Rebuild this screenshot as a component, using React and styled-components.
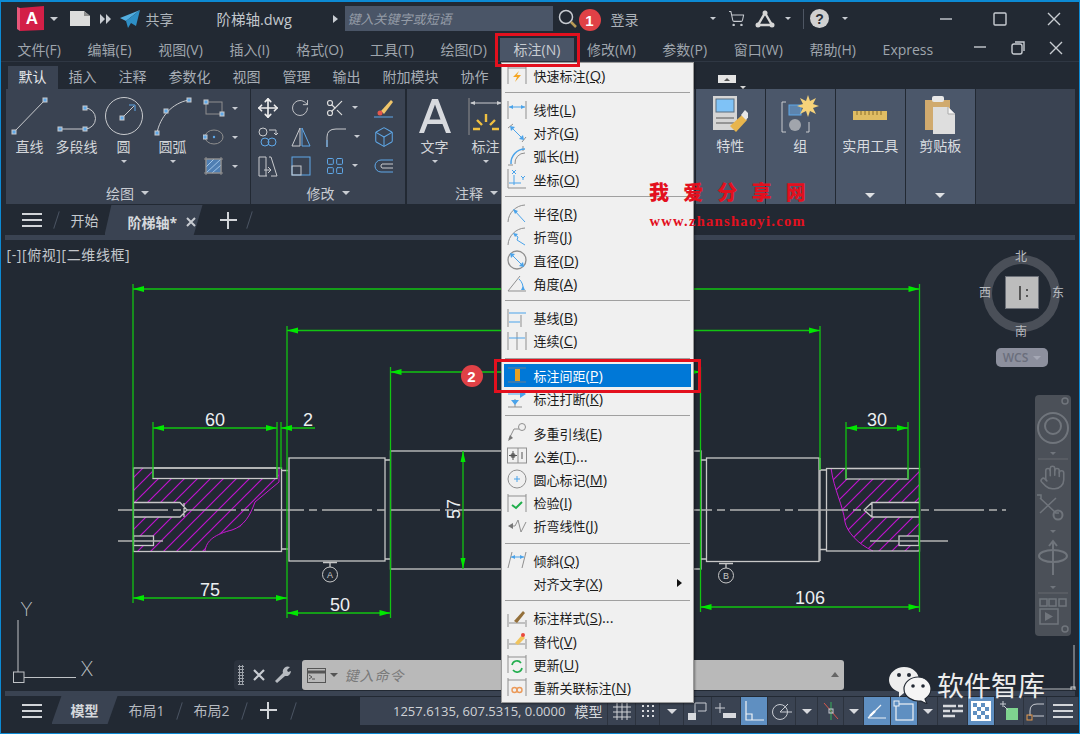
import React from "react";
import styled, { createGlobalStyle } from "styled-components";
import { Box, Hand, LayoutGrid, Move, RotateCw, Scissors, ShoppingCart } from "lucide-react";

const LN = "#c9cbce";
const BL = "#5fa8e8";
const GR = "#8f8f8f";
const MB = "#4aa3ea";
const GREEN = "#12c412";
const ARROW = "#00e800";

const Dot = ({ x, y }) => <rect x={x - 2} y={y - 2} width="4" height="4" fill={BL} />;

const Ico = ({ w = 20, h = 20, vw, vh, children }) => (
  <svg width={w} height={h} viewBox={`0 0 ${vw || w} ${vh || h}`} fill="none" stroke={LN} strokeWidth="1">
    {children}
  </svg>
);

const Caret = styled.span`
  display: inline-block;
  width: 0;
  height: 0;
  border-left: ${(p) => p.$s || 4}px solid transparent;
  border-right: ${(p) => p.$s || 4}px solid transparent;
  border-top: ${(p) => p.$s || 4}px solid ${(p) => p.$c || "#c8ccd2"};
`;

/* ribbon icons */
const LineIcon = (
  <Ico w={38} h={38}>
    <path d="M3 35 L34 3" />
    <Dot x={3} y={35} />
    <Dot x={34} y={3} />
  </Ico>
);
const PolyIcon = (
  <Ico w={42} h={38}>
    <path d="M4 32 H29 A10.5 10.5 0 0 0 29 11" />
    <Dot x={4} y={32} />
    <Dot x={29} y={32} />
    <Dot x={29} y={11} />
  </Ico>
);
const CircleIcon = (
  <Ico w={40} h={40}>
    <circle cx="20" cy="20" r="18.5" />
    <path d="M19 21 L30 10" stroke={LN} />
    <path d="M25 9 H31 V15" stroke={BL} />
    <Dot x={18} y={22} />
  </Ico>
);
const ArcIcon = (
  <Ico w={38} h={38}>
    <path d="M3 36 C6 20 18 6 35 3" />
    <Dot x={3} y={36} />
    <Dot x={12} y={14} />
    <Dot x={35} y={3} />
  </Ico>
);
const RectIcon = (
  <Ico w={22} h={18}>
    <rect x="3" y="3" width="16" height="12" stroke={GR} />
    <Dot x={3} y={3} />
    <Dot x={19} y={15} />
  </Ico>
);
const EllipseIcon = (
  <Ico w={22} h={18}>
    <ellipse cx="11" cy="9" rx="9" ry="7" stroke={GR} />
    <circle cx="11" cy="9" r="1.2" fill={BL} stroke="none" />
    <Dot x={2} y={9} />
  </Ico>
);
const HatchIcon = (
  <Ico w={22} h={20}>
    <rect x="3" y="3" width="15" height="14" fill="#4f7fb3" stroke={GR} />
    <path d="M3 11 L11 3 M3 17 L18 3 M9 17 L18 9" stroke="#9fc4e8" />
    <path d="M1 3 H20 M1 17 H20 M3 1 V19 M18 1 V19" stroke={GR} />
  </Ico>
);
const EraseIcon = (
  <Ico w={22} h={22}>
    <path d="M8 14 L18 3 L20 5 L11 17 Z" fill="#efc56a" stroke="none" />
    <circle cx="7" cy="16" r="2.5" fill="#e4574c" stroke="none" />
    <path d="M1 20 H20" stroke={BL} />
  </Ico>
);
const CopyIcon = (
  <Ico w={22} h={22}>
    <circle cx="6" cy="6" r="4" />
    <path d="M12 4 H19 V9 M17 7 L19 9 L21 7" />
    <circle cx="8" cy="16" r="4" stroke={BL} />
    <circle cx="15" cy="16" r="4" stroke={BL} />
  </Ico>
);
const MirrorIcon = (
  <Ico w={22} h={22}>
    <path d="M10 2 V20 H2 Z" />
    <path d="M12 2 V20 H20 Z" stroke={BL} />
  </Ico>
);
const FilletIcon = (
  <Ico w={22} h={22}>
    <path d="M2 21 V11 Q2 3 11 3 H21" />
    <path d="M2 14 V21" stroke={BL} />
  </Ico>
);
const StretchIcon = (
  <Ico w={22} h={24}>
    <path d="M2 3 V22 H10 M2 3 H9 M12 3 H14 L20 22 H14" />
    <path d="M7 16 H14 M11 13 L14 16 L11 19" />
    <path d="M9 3 V22" stroke={LN} />
  </Ico>
);
const ScaleIcon = (
  <Ico w={22} h={22}>
    <rect x="2" y="2" width="18" height="18" stroke={BL} />
    <rect x="2" y="11" width="9" height="9" stroke={LN} />
  </Ico>
);
const OffsetIcon = (
  <Ico w={22} h={20}>
    <path d="M20 4 H8 A6 6 0 0 0 8 16 H20" stroke={BL} />
    <path d="M20 8 H9 A2.5 2.5 0 0 0 9 12 H20" stroke={LN} />
  </Ico>
);
const TextAIcon = (
  <svg width="40" height="40" viewBox="0 0 40 40">
    <path d="M4 37 L17 3 H23 L36 37 H31 L27.5 28 H12.5 L9 37 Z M14.5 23.5 H25.5 L20 8.5 Z" fill="#d8dade" fillRule="evenodd" />
  </svg>
);
const DimIcon = (
  <Ico w={36} h={38}>
    <path d="M1 1 V38 M35 1 V38" stroke={GR} />
    <path d="M3 6 H33" stroke={LN} />
    <path d="M2 6 L7 4 V8 Z M34 6 L29 4 V8 Z" fill={LN} stroke="none" />
    <path d="M18 17 V25 M9 23 L14 28 M27 23 L22 28 M5 32 H12 M24 32 H31" stroke="#f0c040" strokeWidth="2.4" />
  </Ico>
);
const PropIcon = (
  <Ico w={36} h={40}>
    <rect x="1" y="1" width="24" height="34" fill="#d5d5d5" stroke="none" />
    <rect x="4" y="4" width="18" height="13" fill="#7fc2f6" stroke="#5a6f80" />
    <path d="M4 23 H22 M4 28 H22" stroke="#555" />
    <path d="M18 31 L30 20 L35 25 L24 37 Z" fill="#e8b54d" stroke="none" />
    <path d="M29 20 L33 15 L38 20 L34 25" fill="#e6e6e6" stroke="none" />
  </Ico>
);
const GroupIcon = (
  <Ico w={38} h={40}>
    <path d="M5 7 H1 V37 H5 M25 37 H28 V27" stroke={LN} />
    <rect x="8" y="10" width="12" height="10" fill="#5d84ad" stroke={BL} />
    <circle cx="14" cy="30" r="6" fill="#a1a5ac" stroke="none" />
    <path d="M27 0 L29 6 L35 3 L32 9 L38 11 L32 13 L35 19 L29 16 L27 22 L25 16 L19 19 L22 13 L16 11 L22 9 L19 3 L25 6 Z" fill="#f5d27a" stroke="none" />
  </Ico>
);
const RulerIcon = (
  <Ico w={34} h={12}>
    <rect x="0" y="2" width="34" height="9" fill="#e0bd63" stroke="none" />
    <path d="M4 2 V6 M8 2 V6 M12 2 V6 M16 2 V6 M20 2 V6 M24 2 V6 M28 2 V6" stroke="#8a6f2c" />
  </Ico>
);
const ClipIcon = (
  <Ico w={32} h={40}>
    <rect x="1" y="5" width="25" height="30" fill="#d0aa6e" stroke="none" />
    <rect x="8" y="1" width="12" height="6" rx="2" fill="#e8e8e8" stroke="none" />
    <path d="M9 12 H24 L31 19 V39 H9 Z" fill="#dedede" stroke="none" />
    <path d="M24 12 V19 H31" fill="#f5f5f5" stroke="#aaa" />
  </Ico>
);

/* dimension menu icons */
const Bars = ({ top = 1 }) => <path d={`M1 ${top} V19 M19 ${top} V19`} stroke={GR} />;
const Ah = () => <path d="M2 7 L6 5 V9 Z M18 7 L14 5 V9 Z" fill={MB} stroke="none" />;
const M = ({ children }) => (
  <svg width="20" height="20" viewBox="0 0 20 20" fill="none" stroke={GR} strokeWidth="1">
    {children}
  </svg>
);
const icons = {
  quick: (
    <M>
      <Bars />
      <path d="M1 3 H19" />
      <path d="M12 6 L6 12 H10 L8 17 L14 10 H10 Z" fill="#f5a623" stroke="none" />
    </M>
  ),
  linear: (
    <M>
      <Bars />
      <path d="M2 7 H18" stroke={MB} />
      <Ah />
    </M>
  ),
  aligned: (
    <M>
      <path d="M1 5 L6 1 M15 19 L19 14" />
      <path d="M4 4 L16 16" stroke={MB} />
      <path d="M3 3 L8 4 L4 8 Z M17 17 L12 16 L16 12 Z" fill={MB} stroke="none" />
    </M>
  ),
  arc: (
    <M>
      <path d="M1 19 H6 M16 0 V5" />
      <path d="M4 18 A14 14 0 0 1 18 3" stroke={MB} strokeWidth="1.5" />
      <path d="M8 18 A10 10 0 0 1 18 7" />
    </M>
  ),
  ordinate: (
    <M>
      <path d="M1 0 V19 H19" />
      <path d="M7 6 V16 M2 14 H14" stroke={MB} />
      <path d="M5 1 L9 5 M9 1 L5 5 M14 7 L16 9 L18 7 M16 9 V11" stroke={MB} />
    </M>
  ),
  radius: (
    <M>
      <path d="M1 18 A18 18 0 0 1 18 1" />
      <path d="M7 6 L18 18" stroke={MB} />
      <path d="M6 5 L11 7 L8 10 Z" fill={MB} stroke="none" />
    </M>
  ),
  jogged: (
    <M>
      <path d="M1 18 A18 18 0 0 1 18 1" />
      <path d="M7 7 L11 10 L10 13 L18 18" stroke={MB} />
      <path d="M6 6 L11 7 L8 10 Z" fill={MB} stroke="none" />
    </M>
  ),
  diameter: (
    <M>
      <circle cx="10" cy="10" r="9" strokeWidth="1.3" />
      <path d="M4 4 L16 16" stroke={MB} />
      <path d="M3 3 L8 4 L4 8 Z M17 17 L12 16 L16 12 Z" fill={MB} stroke="none" />
    </M>
  ),
  angular: (
    <M>
      <path d="M1 18 H19 M1 18 L13 3" />
      <path d="M12 6 A13 13 0 0 1 16 17" stroke={MB} />
      <path d="M14 17 L18 17 L16 13 Z" fill={MB} stroke="none" />
    </M>
  ),
  baseline: (
    <M>
      <path d="M1 1 V19 M14 7 V19" />
      <path d="M2 5 H19 M2 14 H13" stroke={MB} />
    </M>
  ),
  continued: (
    <M>
      <Bars />
      <path d="M10 1 V19" />
      <path d="M2 7 H18" stroke={MB} />
    </M>
  ),
  space: (
    <M>
      <path d="M1 3 H19 M1 17 H19" stroke="#6c7f8f" />
      <rect x="8" y="4" width="5" height="12" fill="#e8a020" stroke="none" />
    </M>
  ),
  breakd: (
    <M>
      <path d="M1 18 H15 M8 10 V18" />
      <path d="M1 5 H18" stroke={MB} />
      <path d="M13 1 L19 5 L13 9 Z M4 11 H12 L8 16 Z" fill={MB} stroke="none" />
    </M>
  ),
  leader: (
    <M>
      <circle cx="15" cy="4" r="3.5" />
      <path d="M12 6 H7 L2 16" />
      <path d="M1 18 L3 12 L6 15 Z" fill="#777" stroke="none" />
    </M>
  ),
  tolerance: (
    <M>
      <rect x="0.5" y="2" width="19" height="15" />
      <path d="M11 2 V17" />
      <circle cx="6" cy="9.5" r="2.5" fill="#777" stroke="none" />
      <path d="M2 9.5 H10 M6 5 V14 M15 6 V13" stroke="#555" />
    </M>
  ),
  center: (
    <M>
      <circle cx="10" cy="10" r="9" />
      <path d="M7 10 H13 M10 7 V13" stroke={MB} />
    </M>
  ),
  inspect: (
    <M>
      <Bars />
      <path d="M1 3 H19" />
      <path d="M5 12 L9 15 L15 9" stroke="#1fae4b" strokeWidth="2" />
    </M>
  ),
  jogline: (
    <M>
      <path d="M3 10 H8 L11 4 L14 16 L19 6" />
      <path d="M1 10 L6 7 V13 Z" fill="#777" stroke="none" />
    </M>
  ),
  oblique: (
    <M>
      <path d="M1 18 L5 2 M15 18 L19 2" />
      <path d="M4 7 H17" stroke={MB} />
      <path d="M4 7 L8 5 V9 Z M17 7 L13 5 V9 Z" fill={MB} stroke="none" />
    </M>
  ),
  style: (
    <M>
      <path d="M1 6 V19 M19 12 V19 M2 15 H18" />
      <path d="M7 13 L16 3 L18 5 L10 15 Z" fill="#94703b" stroke="none" />
    </M>
  ),
  override: (
    <M>
      <path d="M1 8 V18 M19 8 V18 M2 13 H18" />
      <path d="M8 12 L15 4 L18 7 L11 14 Z" fill="#f1c45c" stroke="none" />
      <circle cx="16" cy="4" r="2" fill="#e9483d" stroke="none" />
    </M>
  ),
  update: (
    <M>
      <Bars />
      <path d="M1 3 H19" />
      <path d="M5 11 A5 5 0 0 1 14 9 M15 14 A5 5 0 0 1 6 16" stroke="#22ae4e" strokeWidth="1.6" />
    </M>
  ),
  reassoc: (
    <M>
      <Bars />
      <path d="M1 3 H19" />
      <circle cx="7.5" cy="13" r="2.5" stroke="#eb9a5a" strokeWidth="1.4" />
      <circle cx="12.5" cy="13" r="2.5" stroke="#eb9a5a" strokeWidth="1.4" />
    </M>
  ),
};

const menuGroups = [
  [["quick", "快速标注", "Q"]],
  [["linear", "线性", "L"], ["aligned", "对齐", "G"], ["arc", "弧长", "H"], ["ordinate", "坐标", "O"]],
  [["radius", "半径", "R"], ["jogged", "折弯", "J"], ["diameter", "直径", "D"], ["angular", "角度", "A"]],
  [["baseline", "基线", "B"], ["continued", "连续", "C"]],
  [["space", "标注间距", "P", "", true], ["breakd", "标注打断", "K"]],
  [["leader", "多重引线", "E"], ["tolerance", "公差", "T", "..."], ["center", "圆心标记", "M"], ["inspect", "检验", "I"], ["jogline", "折弯线性", "J"]],
  [["oblique", "倾斜", "Q"], [null, "对齐文字", "X", "", false, true]],
  [["style", "标注样式", "S", "..."], ["override", "替代", "V"], ["update", "更新", "U"], ["reassoc", "重新关联标注", "N"]],
];

const menuBar = ["文件(F)", "编辑(E)", "视图(V)", "插入(I)", "格式(O)", "工具(T)", "绘图(D)", "标注(N)", "修改(M)", "参数(P)", "窗口(W)", "帮助(H)", "Express"];
const ribbonTabs = ["默认", "插入", "注释", "参数化", "视图", "管理", "输出", "附加模块", "协作"];

/* dimensions on the drawing */
const HDim = ({ x1, x2, y, left = true, right = true }) => (
  <g>
    <line x1={x1} x2={x2} y1={y} y2={y} stroke={GREEN} strokeWidth="1.3" />
    {left && <path d={`M${x1} ${y} l11 -3 v6 Z`} fill={ARROW} />}
    {right && <path d={`M${x2} ${y} l-11 -3 v6 Z`} fill={ARROW} />}
  </g>
);
const Ext = ({ x, y1, y2 }) => <line x1={x} x2={x} y1={y1} y2={y2} stroke={GREEN} strokeWidth="1.3" />;
const Num = ({ x, y, children, rotate }) => (
  <text x={x} y={y} fill="#eceff1" fontFamily="Liberation Sans" fontSize="18" textAnchor="middle" transform={rotate ? `rotate(-90 ${x} ${y})` : undefined}>
    {children}
  </text>
);

const Drawing = () => (
  <CadSvg viewBox="0 240 1080 450">
    <defs>
      <pattern id="hatch" width="13" height="13" patternUnits="userSpaceOnUse">
        <path d="M-1 14 L14 -1 M-1 1 L1 -1 M12 14 L14 12" stroke="#bd12cc" strokeWidth="1.2" />
      </pattern>
    </defs>

    {/* section hatching */}
    <path
      fillRule="evenodd"
      fill="url(#hatch)"
      d="M133 468 H153 V478.5 H277 V468 H279 V482 L255 502 L248 516 L240 527 L216 535 L207 544 L205 551.5 H133 Z M133 502.5 H180 L187 510 L180 517 H133 Z M133 536 H153 V545.5 H133 Z"
    />
    <path d="M279 468 V482 L255 502 C250 516 244 526 232 530 C216 534 206 540 205 551.5" stroke="#c51ad0" fill="none" />
    <path
      fillRule="evenodd"
      fill="url(#hatch)"
      d="M831 468 H846 V479 H908 V468 H919 V551 H873 C858 544 847 532 845 522 C843 505 834 490 831 468 Z M872 502.5 H919 V517 H872 L864 510 Z M899 536 H919 V545.5 H899 Z"
    />
    <path d="M831 468 C834 490 843 505 845 522 C847 532 858 544 873 551" stroke="#c51ad0" fill="none" />

    {/* shaft outline */}
    <g stroke="#c8c8c8" strokeWidth="1.3" fill="none">
      <rect x="133.5" y="468" width="148" height="83.5" />
      <rect x="153" y="468" width="124" height="10.5" />
      <path d="M133 502.5 H180 L187 510 L180 517 H133 M184 503 V517" />
      <rect x="133.5" y="536" width="20" height="9.5" />
      <path d="M281.5 470.5 H288 M281.5 549 H288" />
      <rect x="289" y="458" width="96" height="103" />
      <path d="M385 460 H391 M385 559 H391" />
      <rect x="390.5" y="451" width="310.5" height="118" />
      <path d="M701 460 H706 M701 559 H706" />
      <rect x="706.5" y="458" width="112.5" height="103.5" />
      <path d="M820 458 V561 M820 470 H826 M820 549.5 H826" />
      <rect x="826.5" y="468.5" width="93" height="82.5" />
      <rect x="846" y="468.5" width="62" height="10.5" />
      <path d="M919 502.5 H872 L864 510 L872 517 H919 M872 503 V517" />
      <rect x="899" y="536" width="20" height="9.5" />
    </g>

    {/* centre lines */}
    <path d="M118 510 H1006" stroke="#b4b4b4" strokeWidth="1.5" strokeDasharray="50 5 8 5" />
    <path d="M118 541 H163 M870 541 H948 M908 541 H915" stroke="#b4b4b4" strokeWidth="1.3" />

    {/* balloons */}
    <g stroke="#c8c8c8" fill="none">
      <path d="M323 562.5 H337 M330 562.5 V567" strokeWidth="1.3" />
      <circle cx="330" cy="574.5" r="7.5" />
      <path d="M719 563.5 H733 M726 563.5 V568" strokeWidth="1.3" />
      <circle cx="726" cy="575.5" r="7.5" />
    </g>
    <text x="330" y="578" fill="#c8c8c8" fontSize="9" fontFamily="Liberation Sans" textAnchor="middle">A</text>
    <text x="726" y="579" fill="#c8c8c8" fontSize="9" fontFamily="Liberation Sans" textAnchor="middle">B</text>

    {/* dimensions */}
    <Ext x={133} y1={284} y2={603} />
    <Ext x={287} y1={326} y2={618} />
    <Ext x={390.5} y1={367} y2={618} />
    <Ext x={700.5} y1={367} y2={612} />
    <Ext x={820} y1={326} y2={470} />
    <Ext x={919.5} y1={284} y2={612} />
    <Ext x={153} y1={422} y2={478} />
    <Ext x={277} y1={422} y2={478} />
    <Ext x={281} y1={422} y2={469} />
    <Ext x={846} y1={422} y2={479} />
    <Ext x={908} y1={422} y2={479} />
    <HDim x1={133} x2={919.5} y={289} />
    <HDim x1={287} x2={820} y={330.5} />
    <HDim x1={390.5} x2={700.5} y={372} />
    <HDim x1={153} x2={277} y={428} />
    <HDim x1={281} x2={315} y={428} right={false} />
    <HDim x1={133} x2={287} y={598} />
    <HDim x1={287} x2={390.5} y={613} />
    <HDim x1={700.5} x2={919.5} y={607} />
    <HDim x1={846} x2={908} y={428} />
    <line x1="463" x2="463" y1="451" y2="569" stroke={GREEN} strokeWidth="1.3" />
    <path d="M463 451 l-2.5 11 h5 Z M463 569 l-2.5 -11 h5 Z" fill={ARROW} />

    <Num x={215} y={426}>60</Num>
    <Num x={308} y={426}>2</Num>
    <Num x={877} y={426}>30</Num>
    <Num x={210} y={596}>75</Num>
    <Num x={340} y={611}>50</Num>
    <Num x={810} y={604}>106</Num>
    <Num x={460} y={509} rotate>57</Num>

    {/* ucs icon */}
    <g stroke="#bfc2c6" strokeWidth="1" fill="none">
      <path d="M18 620 V672 M24 677.5 H76" />
      <rect x="13.5" y="672" width="10.5" height="10.5" />
    </g>
    <text x="26.5" y="616" fill="#bfc2c6" fontFamily="Inter" fontWeight="200" fontSize="19" textAnchor="middle">Y</text>
    <text x="87" y="676" fill="#bfc2c6" fontFamily="Inter" fontWeight="200" fontSize="20" textAnchor="middle">X</text>

    {/* paper corner */}
    <path d="M1074 645 V689 H1040" stroke="#b9bcc0" fill="none" />
    <rect x="1071" y="687" width="4" height="4" stroke="#d5d5d5" fill="none" />
  </CadSvg>
);

const NavIcons = () => (
  <NavBar>
    <svg width="36" height="240" viewBox="0 0 36 240" fill="none" stroke="#70757c" strokeWidth="1.5">
      <circle cx="30" cy="6" r="3" />
      <circle cx="18" cy="33" r="15" strokeWidth="2" />
      <circle cx="18" cy="31" r="8" strokeWidth="2" />
      <path d="M15 57 h6 l-3 3 Z" fill="#70757c" stroke="none" />
      <path d="M3 64 H33" stroke="#5d6067" />
      <path d="M5 103 L21 118 M21 103 L5 118 M2 100 h4 v4 M20 118 h4" />
      <circle cx="23" cy="120" r="4.5" strokeWidth="2" />
      <path d="M15 135 h6 l-3 3 Z" fill="#70757c" stroke="none" />
      <path d="M18 146 V180 M14 151 L18 146 L22 151" strokeWidth="2" />
      <ellipse cx="18" cy="161" rx="14" ry="6" strokeWidth="2" />
      <path d="M15 191 h6 l-3 3 Z" fill="#70757c" stroke="none" />
      <path d="M3 198 H33" stroke="#5d6067" />
      <rect x="5" y="204" width="7" height="7" />
      <rect x="14" y="204" width="7" height="7" />
      <rect x="24" y="204" width="7" height="7" />
      <rect x="5" y="214" width="18" height="15" />
      <path d="M10 217 L18 221.5 L10 226 Z" fill="#70757c" stroke="none" />
      <circle cx="30" cy="234" r="3" />
    </svg>
    <HandOverlay>
      <Hand size={27} strokeWidth={1.4} />
    </HandOverlay>
  </NavBar>
);

const MenuRow = ({ icon, label, hot, suffix, active, sub }) => (
  <MenuItem $active={active}>
    <MenuIcon>{icon && icons[icon]}</MenuIcon>
    <span>
      {label}
      <HotKey>
        (<u>{hot}</u>){suffix}
      </HotKey>
    </span>
    {sub && <SubArrow />}
  </MenuItem>
);

const App = () => {
  return (
    <Frame>
      <GlobalStyle />

      <TitleBar>
        <Logo>
          <svg width="30" height="25" viewBox="0 0 30 25">
            <path d="M3 2 L27 0 V24 L3 25 Z" fill="#d31f47" />
            <path d="M0 1 L3 2 V25 L0 23 Z" fill="#e8567a" />
            <text x="15" y="18" fill="#fff" fontFamily="Liberation Sans" fontWeight="700" fontSize="17" textAnchor="middle">A</text>
          </svg>
        </Logo>
        <Caret $s={4} />
        <svg width="20" height="15" viewBox="0 0 20 15" style={{ marginLeft: 12 }}>
          <path d="M0 0 H14 L20 5 V15 H0 Z" fill="#dcdcdc" />
          <path d="M14 0 V5 H20 Z" fill="#8f8f8f" />
        </svg>
        <FwdGlyph>
          <path d="M0 0 L5 5 L0 10 Z M6 0 L11 5 L6 10 Z" fill="#c8ccd2" />
        </FwdGlyph>
        <svg width="20" height="18" viewBox="0 0 20 18" style={{ marginLeft: 9 }}>
          <path d="M20 0 L0 8 L6 11 Z" fill="#53aee0" />
          <path d="M20 0 L6 11 L8 18 L11 13 L16 16 Z" fill="#2e8fc6" />
        </svg>
        <TitleText $ml={6}>共享</TitleText>
        <FileName>阶梯轴.dwg</FileName>
        <RightTri />
        <SearchBox>键入关键字或短语</SearchBox>
        <svg width="20" height="20" viewBox="0 0 20 20" fill="none" style={{ marginLeft: 5 }}>
          <circle cx="8" cy="8" r="6.5" stroke="#c8ccd2" strokeWidth="1.5" />
          <path d="M13 13 L18 18" stroke="#b79a55" strokeWidth="2.5" />
        </svg>
        <TitleText $ml={33}>登录</TitleText>
        <CaretSlot $w={77}>
          <Caret $s={3} />
        </CaretSlot>
        <ShoppingCart size={17} color="#c8ccd2" strokeWidth={1.5} style={{ marginLeft: 12 }} />
        <svg width="20" height="18" viewBox="0 0 20 18" fill="none" style={{ marginLeft: 10 }}>
          <path d="M10 3 L17 15 H3 Z" stroke="#d5d5d5" strokeWidth="2.4" />
          <circle cx="10" cy="3" r="2.5" fill="#d5d5d5" />
          <circle cx="3" cy="15" r="2.5" fill="#d5d5d5" />
          <circle cx="17" cy="15" r="2.5" fill="#d5d5d5" />
        </svg>
        <CaretSlot $w={16}>
          <Caret $s={3} />
        </CaretSlot>
        <TitleSep />
        <HelpWrap>
          <svg width="19" height="19" viewBox="0 0 19 19">
            <circle cx="9.5" cy="9.5" r="9.5" fill="#d0d0d0" />
            <text x="9.5" y="14.5" fill="#2a3038" fontFamily="Liberation Sans" fontWeight="700" fontSize="14" textAnchor="middle">?</text>
          </svg>
        </HelpWrap>
        <CaretSlot $w={19}>
          <Caret $s={3} />
        </CaretSlot>
        <WinButtons>
          <svg width="14" height="14" viewBox="0 0 14 14" stroke="#c8ccd2" strokeWidth="1.4" fill="none">
            <path d="M1 7 H13" />
          </svg>
          <svg width="14" height="14" viewBox="0 0 14 14" stroke="#c8ccd2" strokeWidth="1.4" fill="none">
            <rect x="1" y="1" width="12" height="12" rx="1" />
          </svg>
          <svg width="14" height="14" viewBox="0 0 14 14" stroke="#c8ccd2" strokeWidth="1.4" fill="none">
            <path d="M1 1 L13 13 M13 1 L1 13" />
          </svg>
        </WinButtons>
      </TitleBar>

      <MenuBar>
        {menuBar.map((m) => (
          <TopMenu key={m} $active={m === "标注(N)"}>
            {m}
          </TopMenu>
        ))}
        <DocButtons>
          <svg width="14" height="14" viewBox="0 0 14 14" stroke="#c8ccd2" strokeWidth="1.4" fill="none">
            <path d="M1 6 H13" />
          </svg>
          <svg width="14" height="14" viewBox="0 0 14 14" stroke="#c8ccd2" strokeWidth="1.4" fill="none">
            <rect x="1" y="3" width="10" height="10" rx="2" />
            <path d="M4 1 H13 V10" />
          </svg>
          <svg width="14" height="14" viewBox="0 0 14 14" stroke="#c8ccd2" strokeWidth="1.4" fill="none">
            <path d="M1 1 L13 13 M13 1 L1 13" />
          </svg>
        </DocButtons>
      </MenuBar>

      <TabRow>
        {ribbonTabs.map((t, i) => (
          <RibbonTab key={t} $active={i === 0}>
            {t}
          </RibbonTab>
        ))}
        <MiniPanelBtn>
          <MiniCaret />
        </MiniPanelBtn>
        <Caret $s={3.5} $c="#d5d5d5" />
      </TabRow>

      <Ribbon>
        <Panel $w={244}>
          <DrawBody>
            <BigTool>
              {LineIcon}
              <ToolLabel>直线</ToolLabel>
            </BigTool>
            <BigTool>
              {PolyIcon}
              <ToolLabel>多段线</ToolLabel>
            </BigTool>
            <BigTool>
              {CircleIcon}
              <ToolLabel>圆</ToolLabel>
              <Caret $s={3.5} />
            </BigTool>
            <BigTool>
              {ArcIcon}
              <ToolLabel>圆弧</ToolLabel>
              <Caret $s={3.5} />
            </BigTool>
            <SmallColumn>
              <SmallRow>
                {RectIcon}
                <Caret $s={3} />
              </SmallRow>
              <SmallRow>
                {EllipseIcon}
                <Caret $s={3} />
              </SmallRow>
              <SmallRow>
                {HatchIcon}
                <Caret $s={3} />
              </SmallRow>
            </SmallColumn>
          </DrawBody>
          <PanelTitle>
            绘图 <Caret $s={4} />
          </PanelTitle>
        </Panel>

        <Panel $w={154}>
          <ModifyBody>
            <Move size={22} color="#eee" strokeWidth={1.8} />
            <RotateCw size={20} color={LN} strokeWidth={1.1} />
            <SmallRow>
              <Scissors size={20} color="#ddd" strokeWidth={1.4} />
              <Caret $s={3} />
            </SmallRow>
            {EraseIcon}
            {CopyIcon}
            {MirrorIcon}
            <SmallRow>
              {FilletIcon}
              <Caret $s={3} />
            </SmallRow>
            <Box size={22} color={BL} strokeWidth={1.1} />
            {StretchIcon}
            {ScaleIcon}
            <SmallRow>
              <LayoutGrid size={20} color={BL} strokeWidth={1.2} />
              <Caret $s={3} />
            </SmallRow>
            {OffsetIcon}
          </ModifyBody>
          <PanelTitle>
            修改 <Caret $s={4} />
          </PanelTitle>
        </Panel>

        <Panel $w={288}>
          <AnnotBody>
            <BigTool $w={56}>
              {TextAIcon}
              <ToolLabel>文字</ToolLabel>
              <Caret $s={3.5} />
            </BigTool>
            <BigTool $w={46}>
              {DimIcon}
              <ToolLabel>标注</ToolLabel>
              <Caret $s={3.5} />
            </BigTool>
          </AnnotBody>
          <PanelTitle $pad={148}>
            注释 <Caret $s={4} />
          </PanelTitle>
        </Panel>

        <TallPanel>
          {PropIcon}
          <TallLabel>特性</TallLabel>
        </TallPanel>
        <TallPanel>
          {GroupIcon}
          <TallLabel>组</TallLabel>
        </TallPanel>
        <TallPanel>
          <RulerSlot>{RulerIcon}</RulerSlot>
          <TallLabel>实用工具</TallLabel>
          <Caret $s={5} $c="#dfe1e4" />
        </TallPanel>
        <TallPanel>
          {ClipIcon}
          <TallLabel>剪贴板</TallLabel>
          <Caret $s={5} $c="#dfe1e4" />
        </TallPanel>
        <RibbonRest />
      </Ribbon>

      <DocTabs>
        <Burger />
        <Slash />
        <DocTab>开始</DocTab>
        <ActiveDocTab>
          阶梯轴*
          <TabClose>
            <svg width="10" height="10" viewBox="0 0 10 10" stroke="#c8ccd2" strokeWidth="2">
              <path d="M1 1 L9 9 M9 1 L1 9" />
            </svg>
          </TabClose>
        </ActiveDocTab>
        <PlusSign $ml={17} />
        <Slash $ml={12} />
      </DocTabs>
      <Strip />

      <Viewport>
        <Drawing />
        <ViewLabel>[-][俯视][二维线框]</ViewLabel>

        <ViewCube>
          <Ring />
          <CubeFace>
            <svg width="22" height="20" viewBox="0 0 22 20" stroke="#555" fill="none">
              <path d="M9 3 V17" strokeWidth="2" />
              <path d="M16 6 V8 M16 12 V14" strokeWidth="2" />
            </svg>
          </CubeFace>
          <Compass $pos="north">北</Compass>
          <Compass $pos="south">南</Compass>
          <Compass $pos="east">东</Compass>
          <Compass $pos="west">西</Compass>
          <WcsPill>
            WCS <Caret $s={4} $c="#a5a8b5" />
          </WcsPill>
        </ViewCube>

        <NavIcons />

        <CommandLine>
          <CmdHandle>
            <Grip />
            <svg width="14" height="14" viewBox="0 0 14 14" stroke="#c8ccd2" strokeWidth="2.2">
              <path d="M2 2 L12 12 M12 2 L2 12" />
            </svg>
            <svg width="18" height="18" viewBox="0 0 18 18" fill="#b6bac0">
              <path d="M1 15 L9 7 A5 5 0 0 1 16 1 L13 4 L14 6 L17 5 A5 5 0 0 1 11 10 L3 17 Z" />
            </svg>
          </CmdHandle>
          <CmdInput>
            <svg width="20" height="15" viewBox="0 0 20 15" fill="none" stroke="#555">
              <rect x="0.5" y="0.5" width="18" height="14" />
              <path d="M0.5 4 H18.5" strokeWidth="3" />
              <path d="M2 7 L5 9 L2 11 M5 11 H8" />
            </svg>
            <Caret $s={4} $c="#555" />
            <CmdText>键入命令</CmdText>
            <CmdUp />
          </CmdInput>
        </CommandLine>
      </Viewport>

      <StatusStrip />
      <StatusBar>
        <Burger $small />
        <ModelTab>模型</ModelTab>
        <LayoutTab>布局1</LayoutTab>
        <Slash />
        <LayoutTab>布局2</LayoutTab>
        <Slash />
        <PlusSign $ml={12} />
        <Slash $ml={16} />
        <Coords>1257.6135, 607.5315, 0.0000</Coords>
        <StatusButton $w={38}>模型</StatusButton>
        <StatusButton $w={28}>
          <Ico w={20} h={20}>
            <path d="M5 1 V19 M10 1 V19 M15 1 V19 M1 6 H19 M1 11 H19 M1 16 H19" stroke="#d0d3d6" />
          </Ico>
        </StatusButton>
        <StatusButton $w={24}>
          <Ico w={16} h={16}>
            <path d="M2 3 h2 M7 3 h2 M12 3 h2 M2 8 h2 M7 8 h2 M12 8 h2 M2 13 h2 M7 13 h2 M12 13 h2" stroke="#d8dade" strokeWidth="2" />
          </Ico>
        </StatusButton>
        <StatusButton $w={24}>
          <Caret $s={5} $c="#d8dade" />
        </StatusButton>
        <StatusButton $w={28}>
          <Ico w={22} h={22}>
            <path d="M8 13 V3 H19 V11 H11" stroke="#c8ccd2" />
            <rect x="1" y="13" width="8" height="7" fill="#d8dade" stroke="none" />
          </Ico>
        </StatusButton>
        <StatusButton $w={29}>
          <Ico w={22} h={20}>
            <path d="M5 2 V12 M0 7 H10" stroke="#c8ccd2" />
            <rect x="8" y="12" width="13" height="5" fill="#d8dade" stroke="none" />
          </Ico>
        </StatusButton>
        <StatusButton $w={27} $on>
          <Ico w={20} h={22}>
            <path d="M2 1 V20 H20 M2 14 H8 V20" stroke="#eef2f6" strokeWidth="1.2" />
          </Ico>
        </StatusButton>
        <StatusButton $w={28}>
          <Ico w={24} h={20}>
            <circle cx="10" cy="11" r="7.5" stroke="#c8ccd2" />
            <path d="M10 11 L18 3 M10 11 H22" stroke="#c8ccd2" />
          </Ico>
        </StatusButton>
        <StatusButton $w={22}>
          <Caret $s={5} $c="#d8dade" />
        </StatusButton>
        <StatusButton $w={26}>
          <Ico w={18} h={20}>
            <path d="M2 2 L16 18" stroke="#d8564a" />
            <path d="M9 1 V19" stroke="#35b05a" />
            <rect x="7" y="8" width="4" height="4" stroke="#c8ccd2" />
          </Ico>
        </StatusButton>
        <StatusButton $w={20}>
          <Caret $s={5} $c="#d8dade" />
        </StatusButton>
        <StatusButton $w={27} $on>
          <Ico w={22} h={20}>
            <path d="M2 17 L15 4 M2 17 H20" stroke="#eef2f6" strokeWidth="1.2" />
            <path d="M4 15 L9 10" stroke="#fff" strokeWidth="2.4" />
          </Ico>
        </StatusButton>
        <StatusButton $w={27} $on>
          <Ico w={22} h={22}>
            <rect x="3" y="4" width="17" height="16" stroke="#eef2f6" strokeWidth="1.2" />
            <rect x="1" y="1" width="5" height="5" stroke="#eef2f6" fill="#5f8fc1" />
          </Ico>
        </StatusButton>
        <StatusButton $w={20}>
          <Caret $s={5} $c="#d8dade" />
        </StatusButton>
        <StatusButton $w={30}>
          <Ico w={20} h={14}>
            <path d="M0 2 H13 M15 2 H20 M0 7 H7 M9 7 H20 M0 12 H12" stroke="#d8dade" strokeWidth="2.4" />
          </Ico>
        </StatusButton>
        <StatusButton $w={27} $on>
          <Ico w={20} h={20}>
            <rect width="20" height="20" fill="#fff" stroke="none" />
            <path d="M2 2 h4 v4 h-4 Z M10 2 h4 v4 h-4 Z M6 6 h4 v4 h-4 Z M14 6 h4 v4 h-4 Z M2 10 h4 v4 h-4 Z M10 10 h4 v4 h-4 Z M6 14 h4 v4 h-4 Z M14 14 h4 v4 h-4 Z" fill="#5f8fc1" stroke="none" />
          </Ico>
        </StatusButton>
        <StatusButton $w={29}>
          <Ico w={20} h={20}>
            <rect x="7" y="7" width="12" height="12" fill="#7fd48f" stroke="none" />
            <path d="M1 3 H7 M4 0 V6 M5 5 L9 9" stroke="#c8ccd2" />
          </Ico>
        </StatusButton>
        <StatusButton $w={23}>
          <Ico w={18} h={20}>
            <path d="M4 15 V10 Q4 3 11 3 H18 M7 15 H18" stroke="#c8ccd2" />
            <rect x="1" y="14" width="5" height="5" stroke="#e69a4c" />
          </Ico>
        </StatusButton>
        <StatusButton $w={32}>
          <Burger $inline />
        </StatusButton>
      </StatusBar>

      <DimMenu>
        {menuGroups.map((group, gi) => (
          <React.Fragment key={gi}>
            {gi > 0 && <MenuSep />}
            {group.map(([icon, label, k, suffix, active, sub]) => (
              <MenuRow key={label + k} icon={icon} label={label} hot={k} suffix={suffix} active={active} sub={sub} />
            ))}
          </React.Fragment>
        ))}
      </DimMenu>

      <RedBox $x={495} $y={33} $w={85} $h={34} />
      <RedBox $x={494} $y={359} $w={207} $h={34} />
      <Badge $x={590} $y={20}>1</Badge>
      <Badge $x={472} $y={376}>2</Badge>
      <WaterTitle>我 爱 分 享 网</WaterTitle>
      <WaterUrl>www.zhanshaoyi.com</WaterUrl>

      <WeChat>
        <svg width="42" height="38" viewBox="0 0 42 38">
          <path d="M15 1 C24 1 30 7 30 14 C30 21 24 27 15 27 L10 31 L10 26 C4 24 0 19 0 14 C0 7 7 1 15 1 Z" fill="#eeeeee" />
          <path d="M29 11 C36 11 42 16 42 23 C42 28 39 31 36 33 L38 38 L32 35 C24 36 15 31 15 23 C15 16 22 11 29 11 Z" fill="#f5f5f5" stroke="#222933" strokeWidth="1.2" />
          <circle cx="10" cy="9" r="2" fill="#222933" />
          <circle cx="20" cy="9" r="2" fill="#222933" />
          <circle cx="24" cy="20" r="1.8" fill="#222933" />
          <circle cx="34" cy="20" r="1.8" fill="#222933" />
        </svg>
        <WeChatName>软件智库</WeChatName>
      </WeChat>
    </Frame>
  );
};

const GlobalStyle = createGlobalStyle`
  html, body {
    margin: 0;
    padding: 0;
    background: #222933;
    overflow: hidden;
  }
  * {
    box-sizing: border-box;
  }
`;

const Frame = styled.div`
  position: relative;
  width: 1080px;
  height: 734px;
  display: flex;
  flex-direction: column;
  background: #222933;
  border: 1.5px solid #0c8ad4;
  border-top-width: 2px;
  overflow: hidden;
  font-family: "Open Sans", "Noto Sans CJK SC", sans-serif;
  font-size: 13px;
  color: #c8ccd2;
`;

const TitleBar = styled.div`
  height: 33px;
  flex: none;
  display: flex;
  align-items: center;
  padding-left: 15.5px;
`;

const Logo = styled.div`
  display: flex;
  margin-right: 3px;
`;

const FwdGlyph = ({ children }) => (
  <svg width="11" height="10" viewBox="0 0 11 10" style={{ marginLeft: 10 }}>
    {children}
  </svg>
);

const TitleText = styled.span`
  font-size: 14px;
  margin-left: ${(p) => p.$ml || 0}px;
  color: #aeb4bb;
`;

const FileName = styled.span`
  font-size: 14.5px;
  margin-left: 43px;
  width: 116px;
  color: #c3c8ce;
`;

const RightTri = styled.span`
  width: 0;
  height: 0;
  border-top: 4px solid transparent;
  border-bottom: 4px solid transparent;
  border-left: 5px solid #c8ccd2;
`;

const SearchBox = styled.div`
  margin-left: 7px;
  width: 208px;
  height: 25px;
  background: #4a5567;
  display: flex;
  align-items: center;
  padding-left: 3px;
  font-style: italic;
  font-size: 13px;
  color: #949ba6;
`;

const CaretSlot = styled.span`
  width: ${(p) => p.$w}px;
  display: flex;
  justify-content: flex-end;
`;

const TitleSep = styled.span`
  width: 1px;
  height: 20px;
  background: #4e5663;
  margin-left: 12px;
`;

const HelpWrap = styled.span`
  display: flex;
  margin-left: 6px;
`;

const WinButtons = styled.div`
  display: flex;
  gap: 40px;
  margin-left: 91px;
`;

const MenuBar = styled.div`
  height: 27px;
  flex: none;
  display: flex;
  align-items: flex-end;
  padding: 0 16.5px 0 3.2px;
  border-bottom: 1px solid #2f3743;
`;

const TopMenu = styled.div`
  height: 23px;
  padding: 0 13.3px;
  line-height: 23px;
  font-size: 14px;
  white-space: nowrap;
  color: ${(p) => (p.$active ? "#c8ccd2" : "#9fa5ad")};
  background: ${(p) => (p.$active ? "#4a5567" : "transparent")};
`;

const DocButtons = styled.div`
  display: flex;
  gap: 24px;
  margin-left: auto;
  align-self: center;
`;

const TabRow = styled.div`
  height: 27px;
  flex: none;
  display: flex;
  align-items: flex-end;
  padding-left: 6.5px;
`;

const RibbonTab = styled.div`
  height: 23px;
  padding: 0 11px;
  line-height: 21px;
  font-size: 14px;
  white-space: nowrap;
  color: ${(p) => (p.$active ? "#e6e8ea" : "#a8aeb6")};
  background: ${(p) => (p.$active ? "#3a4352" : "transparent")};
`;

const MiniPanelBtn = styled.div`
  width: 18px;
  height: 8px;
  margin: 0 4px 6px 218px;
  background: #e4e4e4;
  display: flex;
  align-items: center;
  justify-content: center;
`;

const MiniCaret = styled.span`
  width: 0;
  height: 0;
  border-left: 3px solid transparent;
  border-right: 3px solid transparent;
  border-bottom: 3px solid #555;
`;

const Ribbon = styled.div`
  height: 116px;
  flex: none;
  display: flex;
  gap: 1.5px;
  padding: 0 4.5px 1px;
`;

const Panel = styled.div`
  width: ${(p) => p.$w}px;
  flex: none;
  display: flex;
  flex-direction: column;
  background: #3a4352;
`;

const PanelTitle = styled.div`
  height: 20px;
  margin-bottom: 1px;
  display: flex;
  align-items: center;
  justify-content: center;
  gap: 7px;
  font-size: 14px;
  color: #c8ccd2;
  padding-right: ${(p) => p.$pad || 0}px;
`;

const DrawBody = styled.div`
  flex: 1;
  display: grid;
  grid-template-columns: 48px 46px 48px 50px 52px;
  padding-top: 6px;
`;

const BigTool = styled.div`
  display: flex;
  flex-direction: column;
  align-items: center;
  width: ${(p) => (p.$w ? `${p.$w}px` : "auto")};
  height: 72px;
  & > svg:first-child {
    height: 42px;
    flex: none;
  }
`;

const ToolLabel = styled.div`
  margin-bottom: 3px;
  font-size: 14px;
  line-height: 20px;
  color: #d2d5d9;
  white-space: nowrap;
`;

const SmallColumn = styled.div`
  display: flex;
  flex-direction: column;
  gap: 9px;
  padding: 3px 0 0 5px;
`;

const SmallRow = styled.div`
  height: 20px;
  display: flex;
  align-items: center;
  gap: 7px;
`;

const ModifyBody = styled.div`
  flex: 1;
  display: grid;
  grid-template-columns: 33px 35px 48px 32px;
  grid-auto-rows: 29px;
  justify-items: start;
  align-items: center;
  padding: 4px 0 0 6px;
`;

const AnnotBody = styled.div`
  flex: 1;
  display: flex;
  padding-top: 6px;
`;

const TallPanel = styled.div`
  width: 68.5px;
  flex: none;
  display: flex;
  flex-direction: column;
  align-items: center;
  padding-top: 6px;
  background: #4b576a;
  & > svg {
    height: 40px;
    flex: none;
  }
  & > span {
    margin-top: auto;
    margin-bottom: 6px;
  }
`;

const RulerSlot = styled.div`
  height: 40px;
  display: flex;
  align-items: center;
`;

const TallLabel = styled.div`
  margin-top: 1px;
  font-size: 14px;
  line-height: 20px;
  color: #dadde0;
  white-space: nowrap;
`;

const RibbonRest = styled.div`
  flex: 1;
  background: #3a4352;
`;

const DocTabs = styled.div`
  height: 30px;
  flex: none;
  display: flex;
  align-items: center;
  padding-left: 20.5px;
`;

const Burger = styled.span`
  display: block;
  width: 20px;
  height: 14px;
  flex: none;
  border-top: 2.4px solid #d2d5d9;
  border-bottom: 2.4px solid #d2d5d9;
  background: linear-gradient(#d2d5d9, #d2d5d9) center / 100% 2.4px no-repeat;
`;

const Slash = styled.span`
  width: 1px;
  height: 18px;
  flex: none;
  margin: 0 14px 0 ${(p) => p.$ml || 14}px;
  background: #4b5463;
  transform: rotate(18deg);
`;

const DocTab = styled.div`
  font-size: 14px;
  color: #c5c9ce;
`;

const ActiveDocTab = styled.div`
  width: 98px;
  height: 30px;
  flex: none;
  margin-left: 6px;
  padding: 4px 0 0 23px;
  display: flex;
  align-items: center;
  gap: 9px;
  font-size: 14px;
  font-weight: 700;
  color: #d5d8dc;
  background: #3a4352;
  clip-path: polygon(7% 0, 100% 0, 91% 100%, 0 100%);
`;

const TabClose = styled.span`
  display: flex;
`;

const PlusSign = styled.span`
  width: 17px;
  height: 17px;
  flex: none;
  margin-left: ${(p) => p.$ml || 0}px;
  background:
    linear-gradient(#d2d5d9, #d2d5d9) center / 100% 2.4px no-repeat,
    linear-gradient(#d2d5d9, #d2d5d9) center / 2.4px 100% no-repeat;
`;

const Strip = styled.div`
  height: 5px;
  flex: none;
  margin: 0 4px;
  background: #3a4352;
`;

const Viewport = styled.div`
  position: relative;
  height: 450px;
  flex: none;
`;

const CadSvg = styled.svg`
  display: block;
  position: absolute;
  left: -1.5px;
  top: 0;
  width: 1080px;
  height: 450px;
`;

const ViewLabel = styled.div`
  position: absolute;
  left: 5.5px;
  top: 4px;
  font-size: 14px;
  letter-spacing: 0.6px;
  color: #c3c7cc;
`;

const ViewCube = styled.div`
  position: absolute;
  left: 982px;
  top: 13px;
  width: 78px;
  height: 118px;
`;

const Ring = styled.div`
  position: absolute;
  left: 0;
  top: 2px;
  width: 77px;
  height: 77px;
  border-radius: 50%;
  border: 9px solid #4a4f58;
`;

const CubeFace = styled.div`
  position: absolute;
  left: 22px;
  top: 23px;
  width: 34px;
  height: 33px;
  display: flex;
  align-items: center;
  justify-content: center;
  background: #bcbcbc;
  border: 1px solid #6c7078;
`;

const Compass = styled.span`
  position: absolute;
  font-size: 12px;
  line-height: 14px;
  color: #b9bcc0;
  ${(p) => p.$pos === "north" && "left: 32px; top: -3px;"}
  ${(p) => p.$pos === "south" && "left: 32px; top: 72px;"}
  ${(p) => p.$pos === "east" && "left: 69px; top: 33px;"}
  ${(p) => p.$pos === "west" && "left: -4px; top: 33px;"}
`;

const WcsPill = styled.div`
  position: absolute;
  left: 13px;
  top: 95px;
  width: 52px;
  height: 19px;
  border-radius: 5px;
  display: flex;
  align-items: center;
  justify-content: center;
  gap: 5px;
  font-size: 12px;
  font-weight: 600;
  color: #6a6e7c;
  background: #8d909e;
`;

const NavBar = styled.div`
  position: absolute;
  left: 1034px;
  top: 155px;
  width: 36px;
  height: 241px;
  border-radius: 4px;
  background: #4b5058;
`;

const HandOverlay = styled.div`
  position: absolute;
  left: 4px;
  top: 69px;
  color: #70757c;
  display: flex;
`;

const CommandLine = styled.div`
  position: absolute;
  left: 232.5px;
  top: 420px;
  width: 610px;
  height: 30px;
  display: flex;
`;

const CmdHandle = styled.div`
  width: 68px;
  flex: none;
  display: flex;
  align-items: center;
  gap: 8px;
  padding-left: 4px;
  background: #2b323d;
  border-radius: 4px 0 0 4px;
`;

const Grip = styled.span`
  width: 6px;
  height: 20px;
  background-image: radial-gradient(#9da2a9 1px, transparent 1.2px);
  background-size: 3px 3px;
`;

const CmdInput = styled.div`
  flex: 1;
  position: relative;
  display: flex;
  align-items: center;
  gap: 3px;
  padding-left: 5px;
  background: #b9b9b9;
  border-radius: 3px;
`;

const CmdText = styled.span`
  margin-left: 4px;
  font-style: italic;
  font-size: 14px;
  letter-spacing: 1px;
  color: #7a7a7a;
`;

const CmdUp = styled.span`
  position: absolute;
  right: 5px;
  top: 12px;
  width: 0;
  height: 0;
  border-left: 4px solid transparent;
  border-right: 4px solid transparent;
  border-bottom: 5px solid #666;
`;

const StatusStrip = styled.div`
  height: 5px;
  flex: none;
  margin: 1px 4px 0;
  background: #3a4352;
`;

const StatusBar = styled.div`
  flex: 1;
  display: flex;
  align-items: flex-start;
  padding-left: 20.5px;
  & > ${Burger} {
    margin-top: 8px;
  }
  & > span {
    margin-top: 6px;
  }
`;

const ModelTab = styled.div`
  width: 66px;
  height: 28px;
  flex: none;
  margin-left: 10px;
  display: flex;
  align-items: center;
  justify-content: center;
  font-weight: 700;
  font-size: 14px;
  color: #d5d8dc;
  background: #3a4352;
  clip-path: polygon(15% 0, 100% 0, 85% 100%, 0 100%);
`;

const LayoutTab = styled.div`
  height: 28px;
  margin-left: 11px;
  display: flex;
  align-items: center;
  font-size: 14px;
  color: #b6bac0;
  & + ${Slash} {
    margin-right: 3px;
  }
`;

const Coords = styled.div`
  width: 210px;
  height: 28px;
  flex: none;
  margin: 1px 0 0 0;
  padding-left: 33px;
  display: flex;
  align-items: center;
  font-size: 13px;
  white-space: nowrap;
  color: #cfd2d6;
  background: #3a4352;
  margin-left: auto;
`;

const StatusButton = styled.div`
  width: ${(p) => p.$w}px;
  height: 28px;
  flex: none;
  margin-top: 1px;
  display: flex;
  align-items: center;
  justify-content: center;
  font-size: 14px;
  color: #d5d8dc;
  background: ${(p) => (p.$on ? "#5f8fc1" : "#3a4352")};
  border-right: 1px solid #2c333e;
  & > ${Burger} {
    margin: 0;
  }
`;

const DimMenu = styled.div`
  position: absolute;
  left: 499.5px;
  top: 60px;
  width: 193px;
  height: 641px;
  padding: 0.5px 2px 0;
  background: #f0f0f0;
  border: 1px solid #9a9a9a;
  box-shadow: 1px 1px 2px rgba(0, 0, 0, 0.4);
  color: #1c1c1c;
`;

const MenuItem = styled.div`
  position: relative;
  height: 23.2px;
  display: flex;
  align-items: center;
  font-size: 13px;
  white-space: nowrap;
  color: ${(p) => (p.$active ? "#fff" : "#1c1c1c")};
  background: ${(p) => (p.$active ? "#0078d7" : "transparent")};
`;

const HotKey = styled.span`
  font-size: 14.5px;
`;

const MenuIcon = styled.span`
  width: 30px;
  height: 20px;
  flex: none;
  padding-left: 3px;
  display: flex;
`;

const SubArrow = styled.span`
  position: absolute;
  right: 9px;
  top: 7px;
  width: 0;
  height: 0;
  border-top: 4.5px solid transparent;
  border-bottom: 4.5px solid transparent;
  border-left: 5px solid #111;
`;

const MenuSep = styled.div`
  height: 11.3px;
  display: flex;
  align-items: center;
  padding: 0 1px;
  &::after {
    content: "";
    flex: 1;
    height: 1px;
    background: #a0a0a0;
  }
`;

const RedBox = styled.div`
  position: absolute;
  left: ${(p) => p.$x - 1.5}px;
  top: ${(p) => p.$y - 2}px;
  width: ${(p) => p.$w}px;
  height: ${(p) => p.$h}px;
  border: 3px solid #e3101e;
`;

const Badge = styled.div`
  position: absolute;
  left: ${(p) => p.$x - 12.5}px;
  top: ${(p) => p.$y - 13}px;
  width: 22px;
  height: 22px;
  border-radius: 50%;
  display: flex;
  align-items: center;
  justify-content: center;
  font-family: "Liberation Sans", sans-serif;
  font-size: 15px;
  font-weight: 700;
  color: #fff;
  background: #e04146;
`;

const WaterTitle = styled.div`
  position: absolute;
  left: 648px;
  top: 176px;
  font-family: "Noto Sans CJK SC", sans-serif;
  font-size: 20px;
  line-height: 28px;
  font-weight: 900;
  letter-spacing: 4.8px;
  white-space: nowrap;
  color: #e3101e;
`;

const WaterUrl = styled.div`
  position: absolute;
  left: 648.5px;
  top: 211px;
  font-family: "Liberation Serif", serif;
  font-size: 14.5px;
  line-height: 17px;
  font-weight: 700;
  letter-spacing: 1.3px;
  white-space: nowrap;
  color: #e3101e;
`;

const WeChat = styled.div`
  position: absolute;
  left: 888px;
  top: 664px;
  display: flex;
  align-items: center;
  gap: 6px;
`;

const WeChatName = styled.span`
  font-family: "Noto Sans CJK SC", sans-serif;
  font-size: 27px;
  line-height: 38px;
  color: #ededed;
  white-space: nowrap;
`;

export default App;
